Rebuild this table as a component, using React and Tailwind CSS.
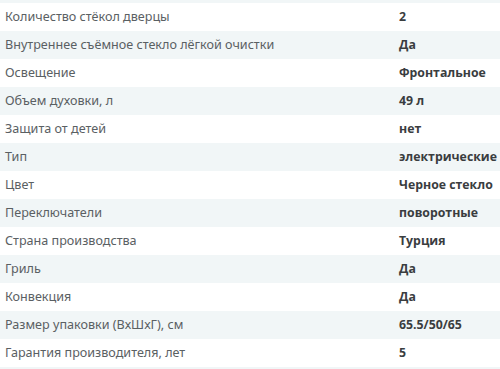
const rows = [
  ["Количество стёкол дверцы", "2"],
  ["Внутреннее съёмное стекло лёгкой очистки", "Да"],
  ["Освещение", "Фронтальное"],
  ["Объем духовки, л", "49 л"],
  ["Защита от детей", "нет"],
  ["Тип", "электрические"],
  ["Цвет", "Черное стекло"],
  ["Переключатели", "поворотные"],
  ["Страна производства", "Турция"],
  ["Гриль", "Да"],
  ["Конвекция", "Да"],
  ["Размер упаковки (ВхШхГ), см", "65.5/50/65"],
  ["Гарантия производителя, лет", "5"],
];

export default function App() {
  return (
    <div className="w-[500px] h-[369px] overflow-hidden bg-[#f1f6f7] pt-[3px]">
      {rows.map(([label, value], i) => (
        <div
          key={label}
          className={`flex items-center h-[28px] ${i % 2 === 0 ? "bg-white" : "bg-[#f1f6f7]"}`}
        >
          <div className="w-[397px] pl-[5px] text-[12.6px] text-[#5a6063] font-['Noto_Sans',sans-serif]">
            {label}
          </div>
          <div className="flex-1 pl-[2px] text-[12.3px] font-bold text-[#3a3d3f] font-['Open_Sans',sans-serif] whitespace-nowrap">
            {value}
          </div>
        </div>
      ))}
    </div>
  );
}
